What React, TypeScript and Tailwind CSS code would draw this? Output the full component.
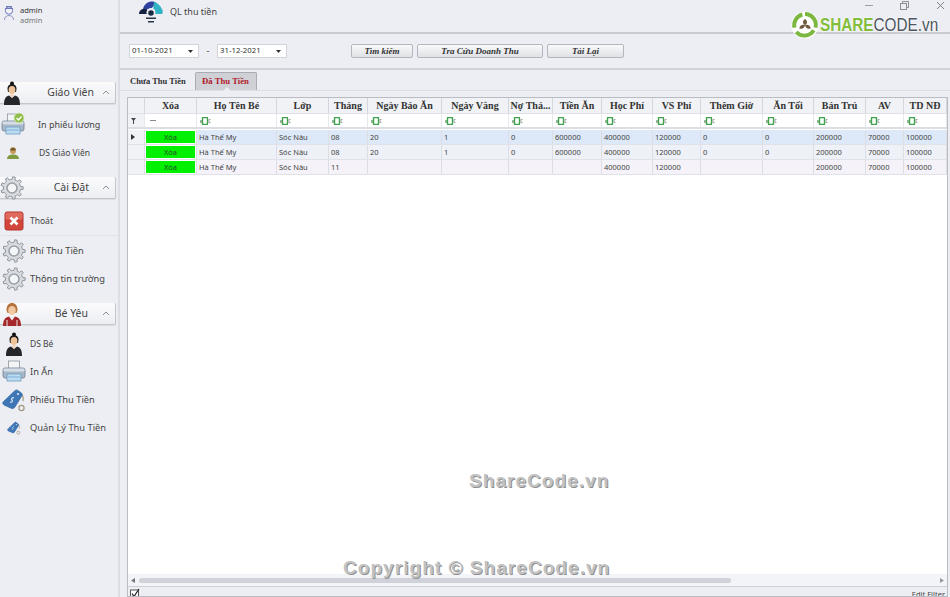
import React from "react";

const sans = "font-['Noto_Sans','Liberation_Sans',sans-serif]";
const serif = "font-['Liberation_Serif',serif]";

function gearPath(cx: number, cy: number, ro: number, ri: number, n: number) {
  const pts: string[] = [];
  for (let i = 0; i < n; i++) {
    const a = (i / n) * Math.PI * 2;
    const w = (Math.PI * 2) / n;
    const seq: [number, number][] = [
      [ri, a - w * 0.5],
      [ri, a - w * 0.26],
      [ro, a - w * 0.16],
      [ro, a + w * 0.16],
      [ri, a + w * 0.26],
    ];
    seq.forEach(([r, t]) => pts.push(`${(cx + r * Math.cos(t)).toFixed(2)},${(cy + r * Math.sin(t)).toFixed(2)}`));
  }
  return "M" + pts.join("L") + "Z";
}

function Gear({ size = 24 }: { size?: number }) {
  return (
    <svg width={size} height={size} viewBox="0 0 24 24">
      <path d={gearPath(12, 12, 11.2, 8.6, 9)} fill="#d8dbe0" stroke="#8f959c" strokeWidth="1" />
      <circle cx="12" cy="12" r="5" fill="#f4f5f7" stroke="#9aa0a6" strokeWidth="1.6" />
    </svg>
  );
}

function Woman({ size = 24 }: { size?: number }) {
  return (
    <svg width={size} height={size} viewBox="0 0 24 24">
      <circle cx="12" cy="2.6" r="2" fill="#111" />
      <path d="M7.500 8c0-3.400 2-4.800 4.500-4.800s4.500 1.400 4.500 4.800l-.5 3h-8z" fill="#1a1a1a" />
      <ellipse cx="12" cy="9" rx="3.400" ry="4" fill="#efc39a" />
      <path d="M4 24c0-6 1.500-8.500 5-9.500l3 2.500 3-2.500c3.500 1 5 3.500 5 9.500z" fill="#24262a" />
      <path d="M10 14l2 3 2-3-2-1z" fill="#f3d2b3" />
    </svg>
  );
}

function Boy({ size = 24 }: { size?: number }) {
  return (
    <svg width={size} height={size} viewBox="0 0 24 24">
      <path d="M6.500 8c0-4.500 2.500-7 5.500-7s5.500 2.500 5.500 7l-1 3h-9z" fill="#b5713a" />
      <ellipse cx="12" cy="8.500" rx="3.800" ry="4.500" fill="#f2c9a2" />
      <path d="M3 24c0-6 2-8.500 6-9.500l3 2 3-2c4 1 6 3.500 6 9.500z" fill="#a4282b" />
      <path d="M9 14.500l3 4 3-4-3 1.500z" fill="#f6f6f6" />
      <path d="M7 24v-6M17 24v-6" stroke="#e8e8e8" strokeWidth="1" />
    </svg>
  );
}

function SmallPerson() {
  return (
    <svg width="14" height="14" viewBox="0 0 14 14">
      <ellipse cx="7" cy="4.500" rx="3" ry="3.500" fill="#c99a5f" />
      <path d="M4.400 3.500c.5-2 4.700-2 5.200 0l-.4 1H4.800z" fill="#6f5a2b" />
      <path d="M1 13c0-3 2-4.500 6-4.500s6 1.500 6 4.500z" fill="#7f9a3f" />
    </svg>
  );
}

function Printer({ check }: { check?: boolean }) {
  return (
    <svg width="24" height="24" viewBox="0 0 24 24">
      <rect x="6.500" y="1" width="11" height="8" fill="#f3f4f6" stroke="#8e96a0" strokeWidth="0.8" />
      <rect x="1" y="8" width="22" height="10" rx="2" fill="#a9b8c8" stroke="#6d7f93" strokeWidth="0.8" />
      <rect x="1.500" y="8.500" width="21" height="3" rx="1" fill="#d5dde6" />
      <rect x="5" y="14" width="14" height="7" fill="#bcdcf2" stroke="#6f9cc0" strokeWidth="0.8" />
      <path d="M6 17h12" stroke="#7fb0d6" strokeWidth="1" />
      {check && <circle cx="18" cy="5" r="5" fill="#8fbd4a" stroke="#dbe8be" strokeWidth="0.8" />}
      {check && <path d="M15.500 5l2 2 3-3.500" stroke="#fff" strokeWidth="1.300" fill="none" />}
    </svg>
  );
}

function RedX() {
  return (
    <svg width="20" height="20" viewBox="0 0 20 20">
      <rect x="1" y="1" width="18" height="18" rx="2" fill="#d2453a" stroke="#b0352c" />
      <rect x="1.500" y="1.500" width="17" height="7" rx="1.500" fill="#e0695d" />
      <path d="M6.500 6.500l7 7M13.500 6.500l-7 7" stroke="#fff" strokeWidth="2.600" />
    </svg>
  );
}

function Tag({ size = 24 }: { size?: number }) {
  return (
    <svg width={size} height={size} viewBox="0 0 24 24">
      <path d="M17 5c3 0 5 4 4 8" fill="none" stroke="#a59680" strokeWidth="1.200" />
      <path d="M1 14L13 2.500c1-.8 2-.8 3 0l3.500 2.500c.8.800.8 2 .3 3L13 19c-1 1.500-2.500 2-4 1.200L2 17c-1.200-.8-1.500-2-1-3z" fill="#3f76b6" stroke="#2f5f98" strokeWidth="0.6" />
      <path d="M8 14c2 1 3-1 2-2s0-3 2-2" stroke="#dbe8f6" strokeWidth="1.200" fill="none" />
      <circle cx="16" cy="6" r="1" fill="#eaf2fb" />
      <circle cx="19.500" cy="20" r="2.600" fill="none" stroke="#a59680" strokeWidth="1.200" />
    </svg>
  );
}

function AbcIcon() {
  return (
    <svg width="11" height="8" viewBox="0 0 11 8" className="block">
      <rect x="0" y="3" width="2" height="3" fill="#9ab89a" />
      <rect x="2.500" y="0.500" width="5" height="7" rx="0.500" fill="#fff" stroke="#3fa34d" strokeWidth="1.400" />
      <path d="M10.500 2.500H9v3h1.500" fill="none" stroke="#8a8f96" strokeWidth="0.800" />
    </svg>
  );
}

function Logo() {
  return (
    <svg width="28" height="28" viewBox="0 0 32 32">
      <circle cx="16" cy="16" r="15.500" fill="#fff" />
      <path d="M16 3.500A12.500 12.500 0 0 1 28 19" fill="none" stroke="#7cb73f" strokeWidth="4.500" />
      <path d="M26 22A12.500 12.500 0 0 1 6 24" fill="none" stroke="#7cb73f" strokeWidth="4.500" />
      <path d="M4 19A12.500 12.500 0 0 1 13 4" fill="none" stroke="#7cb73f" strokeWidth="4.500" />
      <path d="M16 9c3 2 3 5 0 7-3-2-3-5 0-7z" fill="#6d5a3c" />
      <path d="M16 16c3-1 6 0 6.500 4-3.500 1-6-.5-6.500-4z" fill="#6d5a3c" />
      <path d="M16 16c-3-1-6 0-6.500 4 3.500 1 6-.5 6.500-4z" fill="#6d5a3c" />
    </svg>
  );
}

function AppIcon() {
  return (
    <svg width="24" height="22" viewBox="0 0 24 22">
      <path d="M4 8C5 3 9 .5 13 .5c2 0 3 .500 4 1.500l-5 6z" fill="#2e3f9e" />
      <path d="M15 1c4 1 7 4 8 8h-9z" fill="#2fb3c4" />
      <path d="M0 13c0-3 2-5 5-5h3l3 5z" fill="#15223f" />
      <path d="M14 8h9c1 2 1 4 0 5h-9z" fill="#2fb3c4" />
      <circle cx="12" cy="11.500" r="4.500" fill="#eceef3" />
      <circle cx="12" cy="12" r="2.800" fill="#1b2b44" />
      <rect x="7" y="16.500" width="10" height="1.500" fill="#2b3547" />
      <rect x="9" y="20" width="6" height="1.500" fill="#2b3547" />
    </svg>
  );
}

function SectionHeader({ icon, title, pr }: { icon: React.ReactNode; title: string; pr: string }) {
  return (
    <div className="relative flex h-[22px] w-[116px] items-center justify-between rounded-r-[2px] border-b border-r border-[#c3c6cc] bg-gradient-to-b from-[#fbfbfc] to-[#eceef2] shadow-[0_1px_1px_rgba(0,0,0,0.08)]">
      <div className="flex w-[24px] justify-center">{icon}</div>
      <span className={`pt-[1px] text-[10.500px] text-[#444] ${pr}`}>{title}</span>
      <svg width="8" height="5" viewBox="0 0 8 5" className="absolute right-[5px] top-[8px]">
        <path d="M1 4l3-3 3 3" stroke="#8a8d93" fill="none" />
      </svg>
    </div>
  );
}

function Item({ icon, label, small }: { icon: React.ReactNode; label: string; small?: boolean }) {
  return (
    <div className="flex h-[28px] items-center">
      <div className="flex w-[26px] shrink-0 justify-center pl-[1px]">{icon}</div>
      <span className={`ml-[4px] whitespace-nowrap text-[#444] ${small ? "pt-[1px] text-[8.500px]" : "text-[9.300px]"}`}>{label}</span>
    </div>
  );
}

const cols = "grid-cols-[17px_52px_80px_52px_39px_74px_67px_44px_49px_51px_48px_62px_51px_52px_38px_43px]";
const headers = ["", "Xóa", "Họ Tên Bé", "Lớp", "Tháng", "Ngày Báo Ăn", "Ngày Vắng", "Nợ Thá...", "Tiền Ăn", "Học Phí", "VS Phí", "Thêm Giờ", "Ăn Tối", "Bán Trú", "AV", "TD NĐ"];
const rows: { bg: string; cells: string[] }[] = [
  { bg: "bg-[#dde8f8]", cells: ["Hà Thế My", "Sóc Nâu", "08", "20", "1", "0", "600000", "400000", "120000", "0", "0", "200000", "70000", "100000"] },
  { bg: "bg-[#eef1f8]", cells: ["Hà Thế My", "Sóc Nâu", "08", "20", "1", "0", "600000", "400000", "120000", "0", "0", "200000", "70000", "100000"] },
  { bg: "bg-[#f5f2fa]", cells: ["Hà Thế My", "Sóc Nâu", "11", "", "", "", "", "400000", "120000", "", "", "200000", "70000", "100000"] },
];

function Btn({ w, label }: { w: string; label: string }) {
  return (
    <button className={`h-[14px] ${w} rounded-[2px] border border-[#b4b7bd] bg-gradient-to-b from-[#fafafa] to-[#dfe1e6] text-[9px] font-bold italic leading-none text-[#333] ${serif}`}>
      {label}
    </button>
  );
}

function DateBox({ value }: { value: string }) {
  return (
    <div className="flex h-[14px] w-[70px] items-center justify-between border border-[#d3d5da] bg-white pl-[2px] pr-[5px] text-[7.800px] text-[#333]">
      <span>{value}</span>
      <svg width="5" height="3" viewBox="0 0 5 3"><path d="M0 0h5L2.500 3z" fill="#333" /></svg>
    </div>
  );
}

export default function App() {
  return (
    <div className={`relative flex h-[597px] w-[950px] overflow-hidden bg-[#eceef3] ${sans}`}>
      <aside className="flex h-full w-[120px] shrink-0 flex-col border-r-2 border-[#dcdee3]">
        <div className="flex h-[82px] items-start pl-[2px] pt-[5px]">
          <svg width="14" height="16" viewBox="0 0 14 16">
            <circle cx="7" cy="5.500" r="3.700" fill="#f1f2fa" stroke="#6f78b8" strokeWidth="1" />
            <path d="M3 3.500h8M4 1.500h6" stroke="#6f78b8" strokeWidth="1" />
            <path d="M2.500 15c0-3 2-4.500 4.500-4.500s4.500 1.500 4.500 4.500" fill="none" stroke="#8e95c4" strokeWidth="1" />
          </svg>
          <div className="ml-[4px] text-[7.500px] leading-[10px]">
            <div className="text-[#333]">admin</div>
            <div className="text-[#777]">admin</div>
          </div>
        </div>
        <SectionHeader icon={<Woman />} title="Giáo Viên" pr="pr-[21px]" />
        <div className="mt-[7px]">
          <div className="flex h-[28px] items-center">
            <div className="flex w-[26px] shrink-0 justify-center"><Printer check /></div>
            <span className="ml-[12px] whitespace-nowrap text-[9px] text-[#444]">In phiếu lương</span>
          </div>
          <div className="flex h-[28px] items-center">
            <div className="flex w-[26px] shrink-0 justify-center"><SmallPerson /></div>
            <span className="ml-[13px] whitespace-nowrap text-[8.500px] text-[#444]">DS Giáo Viên</span>
          </div>
        </div>
        <div className="mt-[10px]"><SectionHeader icon={<Gear />} title="Cài Đặt" pr="pr-[26px]" /></div>
        <div className="mt-[8px] border-b border-[#e0e2e7]"><Item icon={<RedX />} label="Thoát" small /></div>
        <div className="mt-[1px]">
          <Item icon={<Gear />} label="Phí Thu Tiền" />
          <Item icon={<Gear />} label="Thông tin trường" />
        </div>
        <div className="mt-[10px]"><SectionHeader icon={<Boy />} title="Bé Yêu" pr="pr-[27px]" /></div>
        <div className="mt-[5px]">
          <Item icon={<Woman />} label="DS Bé" small />
          <Item icon={<Printer />} label="In Ấn" />
          <Item icon={<Tag />} label="Phiếu Thu Tiền" />
          <Item icon={<Tag size={14} />} label="Quản Lý Thu Tiền" />
        </div>
      </aside>

      <main className="flex min-w-0 flex-1 flex-col">
        <header className="flex h-[34px] shrink-0 items-center border-b-2 border-[#c9cbd0] pb-[10px] pl-[19px] pt-[2px]">
          <AppIcon />
          <span className="ml-[7px] text-[9px] text-[#444]">QL thu tiền</span>
        </header>

        <div className="flex h-[36px] shrink-0 items-center border-b-2 border-[#d0d2d7] pl-[9px]">
          <DateBox value="01-10-2021" />
          <span className="w-[18px] text-center text-[9px] text-[#444]">-</span>
          <DateBox value="31-12-2021" />
          <div className="ml-[64px] flex gap-[4px]">
            <Btn w="w-[62px]" label="Tìm kiếm" />
            <Btn w="w-[126px]" label="Tra Cứu Doanh Thu" />
            <Btn w="w-[77px]" label="Tải Lại" />
          </div>
        </div>

        <div className="mt-[2px] flex h-[19px] shrink-0 items-stretch border-b border-[#dcdee3] pl-[7px]">
          <div className={`flex w-[68px] items-center pl-[3px] text-[8.500px] font-bold text-[#333] ${serif}`}>Chưa Thu Tiền</div>
          <div className={`relative flex w-[62px] items-center justify-center rounded-t-[2px] border border-b-0 border-[#a9acb3] bg-[#cfd1d7] pr-[1px] text-[8.700px] font-bold text-[#b0202a] ${serif}`}>
            Đã Thu Tiền
            <span className="absolute bottom-[-1px] left-[27px] h-0 w-0 border-x-[4px] border-b-[4px] border-x-transparent border-b-[#eceef3]" />
          </div>
        </div>

        <section className="ml-[7px] mr-[2px] mt-[6px] flex min-h-0 flex-1 flex-col border border-[#b9bcc2] bg-white">
          <div className={`grid ${cols} h-[16px] shrink-0 border-b border-[#dfe1e6] bg-[#f0f2f5]`}>
            {headers.map((h, i) => (
              <div key={i} className={`flex items-center justify-center overflow-hidden whitespace-nowrap border-r border-[#d3d6dc] text-[10px] font-bold text-[#333] ${serif}`}>{h}</div>
            ))}
          </div>
          <div className={`grid ${cols} h-[15px] shrink-0 border-b-2 border-[#dcdee3]`}>
            {headers.map((_, i) => (
              <div key={i} className={`flex items-center border-r border-[#e6e8ec] pl-[3px] ${i === 0 ? "bg-[#f0f2f5]" : "bg-white"}`}>
                {i === 0 ? (
                  <svg width="5" height="7" viewBox="0 0 5 7" className="ml-[0px]"><path d="M0 1h5L3 3.500V7H2V3.500z" fill="#444" /></svg>
                ) : i === 1 ? (
                  <span className="ml-[2px] h-[1px] w-[6px] bg-[#888]" />
                ) : (
                  <AbcIcon />
                )}
              </div>
            ))}
          </div>
          <div className="mt-[1px] flex flex-col">
            {rows.map((r, ri) => (
              <div key={ri} className={`grid ${cols} h-[15px] border-b border-[#e0e2e8]`}>
                <div className="flex items-center border-r border-[#dcdee3] bg-[#f0f2f5] pl-[3px]">
                  {ri === 0 && <svg width="4" height="6" viewBox="0 0 4 6"><path d="M0 0l4 3-4 3z" fill="#333" /></svg>}
                </div>
                <div className="border-r border-[#dcdee3] bg-white px-[1px] py-[1px]">
                  <div className="flex h-full items-center justify-center bg-[#00f000] pt-[1px] text-[7.500px] text-[#2a4a2a]">Xóa</div>
                </div>
                {r.cells.map((c, ci) => (
                  <div key={ci} className={`flex items-center overflow-hidden whitespace-nowrap border-r border-[#dcdee3] pl-[2px] pt-[1px] text-[7.500px] text-[#444] ${r.bg}`}>{c}</div>
                ))}
              </div>
            ))}
          </div>
          <div className="flex-1" />
          <div className="flex h-[12px] shrink-0 items-center justify-between bg-[#f3f4f7] px-[3px]">
            <svg width="4" height="5" viewBox="0 0 4 5"><path d="M4 0L0 2.500 4 5z" fill="#777" /></svg>
            <div className="ml-[4px] mr-[209px] h-[5px] flex-1 rounded-full bg-[#cfd2d9]" />
            <svg width="4" height="5" viewBox="0 0 4 5"><path d="M0 0l4 2.500L0 5z" fill="#999" /></svg>
          </div>
          <div className="flex h-[10px] shrink-0 items-start justify-between overflow-hidden border-t border-[#cdd0d6] bg-[#eceef3] pl-[2px] pr-[2px]">
            <svg width="11" height="11" viewBox="0 0 11 11" className="mt-[1px]">
              <rect x="0.500" y="2" width="8" height="8" fill="#fff" stroke="#555" />
              <path d="M2 5.500l2 3L9 1" fill="none" stroke="#222" strokeWidth="1.200" />
            </svg>
            <span className="mt-[2px] whitespace-nowrap text-[7.500px] leading-[10px] text-[#444]">Edit Filter</span>
          </div>
        </section>
      </main>

      <div className="absolute right-[5px] top-0 flex h-[10px] w-[80px] items-center justify-between">
        <span className="h-[1px] w-[8px] bg-[#9a9da3]" />
        <svg width="9" height="9" viewBox="0 0 9 9" className="ml-[24px]">
          <rect x="0.500" y="2.500" width="6" height="6" fill="none" stroke="#8a8d93" />
          <path d="M2.500 2.500v-2h6v6h-2" fill="none" stroke="#8a8d93" />
        </svg>
        <svg width="9" height="9" viewBox="0 0 9 9" className="ml-[24px]">
          <path d="M1 1l7 7M8 1L1 8" stroke="#7f8288" />
        </svg>
      </div>

      <div className="absolute left-[791px] top-[11px] flex items-center">
        <Logo />
        <span className="ml-[1px] origin-left scale-x-[0.85] whitespace-nowrap font-['Liberation_Sans',sans-serif] text-[18px] leading-none [text-shadow:0_0_2px_#fff,0_0_2px_#fff]">
          <span className="font-bold text-[#83bd3c]">SHARE</span>
          <span className="text-[#4c5560]">CODE.vn</span>
        </span>
      </div>

      <div className="absolute left-[469px] top-[471px] font-['Liberation_Sans',sans-serif] text-[19px] font-bold leading-none tracking-[1.05px] text-[#c2c2c2] [text-shadow:1px_1px_0_#8f8f8f]">ShareCode.vn</div>
      <div className="absolute left-[343px] top-[558px] whitespace-nowrap font-['Liberation_Sans',sans-serif] text-[19px] font-bold leading-none tracking-[1.05px] text-[#c2c2c2] [text-shadow:1px_1px_0_#8f8f8f]">Copyright © ShareCode.vn</div>
    </div>
  );
}
